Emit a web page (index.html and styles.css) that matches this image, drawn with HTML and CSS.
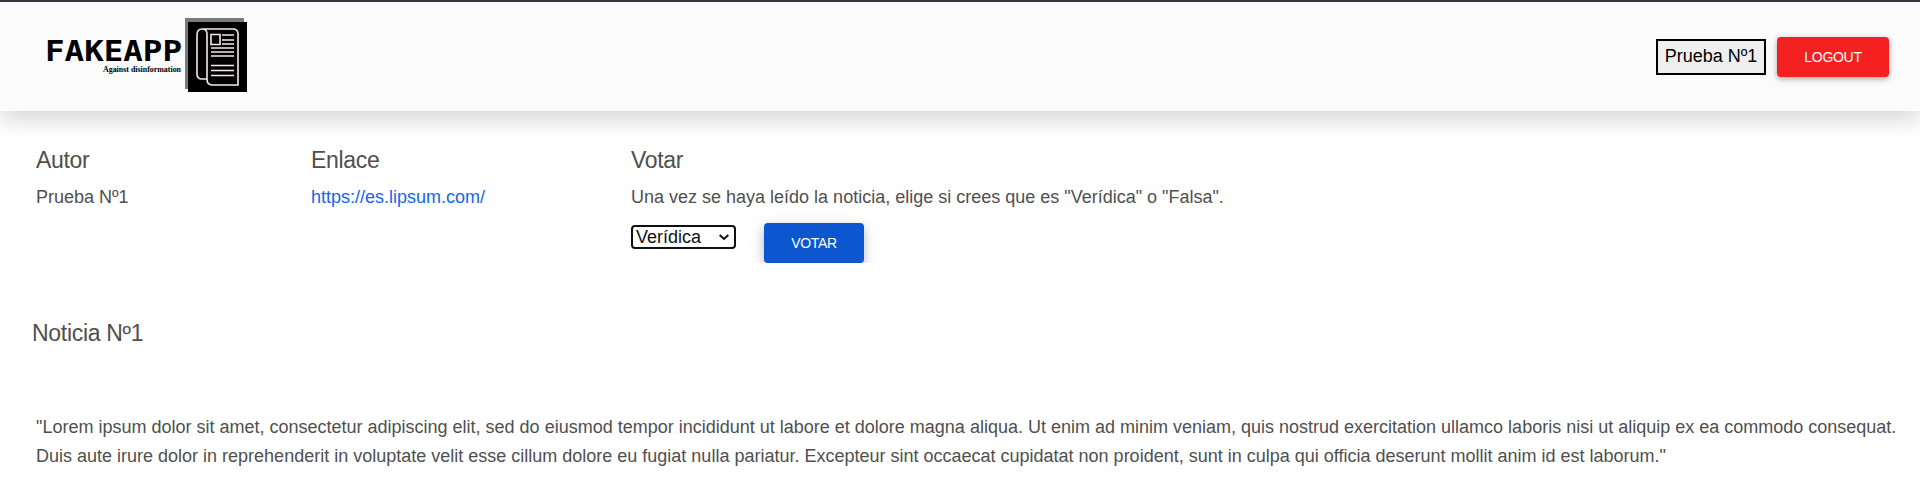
FILE: index.html
```html
<!DOCTYPE html>
<html lang="es">
<head>
<meta charset="utf-8">
<title>FakeApp</title>
<link rel="stylesheet" href="styles.css">
</head>
<body>
<header class="navbar">
  <div class="brand">
    <div class="brand-text">
      <svg class="wordmark" width="140" height="46" viewBox="0 0 140 46">
        <text class="brand-name" x="0" y="26.500" textLength="137" lengthAdjust="spacingAndGlyphs">FAKEAPP</text>
        <text class="brand-tagline" x="58" y="38" textLength="78" lengthAdjust="spacingAndGlyphs">Against disinformation</text>
      </svg>
    </div>
    <svg class="brand-icon" width="62" height="75" viewBox="0 0 62 75">
      <path fill="#7b7b7b" d="M0 0h59v71H0z"/>
      <path fill="#000" d="M3 4h59v70H3z"/>
      <g fill="none" stroke="#f5e8ea" stroke-width="1.6">
        <path d="M17 11h31q5 0 5 5v51H27q-5 0-5-6V16q0-5-5-5-5 0-5 6v39q0 5 5 5h5"/>
        <path d="M26 16.5h9v10h-9z"/>
        <path d="M37 17h12M37 22h12M37 26h12M26 30h23M26 34h23M26 38h23M26 47.500h23M26 52.500h23M26 57.500h23"/>
      </g>
    </svg>
  </div>
  <div class="session">
    <button class="user">Prueba Nº1</button>
    <button class="btn btn-logout">LOGOUT</button>
  </div>
</header>
<main class="content">
  <section class="details">
    <div class="column">
      <h2 class="heading">Autor</h2>
      <p class="text">Prueba Nº1</p>
    </div>
    <div class="column">
      <h2 class="heading">Enlace</h2>
      <p class="text"><a class="link" href="https://es.lipsum.com/">https://es.lipsum.com/</a></p>
    </div>
    <div class="column">
      <h2 class="heading">Votar</h2>
      <p class="text">Una vez se haya leído la noticia, elige si crees que es "Verídica" o "Falsa".</p>
      <form class="vote">
        <div class="select">
          <span>Verídica</span>
          <svg width="10" height="7" viewBox="0 0 10 7"><path d="M.7 1l4.300 4 4.300-4" fill="none" stroke="#101010" stroke-width="2"/></svg>
        </div>
        <button class="btn btn-vote" type="button">VOTAR</button>
      </form>
    </div>
  </section>
  <h2 class="heading news-title">Noticia Nº1</h2>
  <p class="text news-body">"Lorem ipsum dolor sit amet, consectetur adipiscing elit, sed do eiusmod tempor incididunt ut labore et dolore magna aliqua. Ut enim ad minim veniam, quis nostrud exercitation ullamco laboris nisi ut aliquip ex ea commodo consequat. Duis aute irure dolor in reprehenderit in voluptate velit esse cillum dolore eu fugiat nulla pariatur. Excepteur sint occaecat cupidatat non proident, sunt in culpa qui officia deserunt mollit anim id est laborum."</p>
</main>
</body>
</html>
```
FILE: styles.css
```css
* { box-sizing: border-box; }
body {
  margin: 0;
  background: #fff;
  color: #4f4f4f;
  font: 18px/29px "Liberation Sans", Arial, sans-serif;
  overflow: hidden;
}
svg { display: block; }
.navbar {
  display: flex;
  justify-content: space-between;
  align-items: flex-start;
  height: 111px;
  padding: 16px 31px 0 45px;
  border-top: 2px solid #3b3740;
  background: #fbfbfb;
  box-shadow: 0 10px 20px rgba(0, 0, 0, .15);
}
.brand { display: flex; }
.brand-text { padding-top: 16px; }
.wordmark { overflow: visible; }
.brand-name { font: bold 28.5px "DejaVu Sans Mono", monospace; }
.brand-tagline { font: bold 8.5px "Liberation Serif", serif; }
.session { display: flex; align-items: center; gap: 11px; padding-top: 19px; }
.user {
  width: 110px;
  height: 36px;
  padding: 0 0 2px;
  border: 2px solid #000;
  background: #efefef;
  color: #000;
  font: 18px/28px "Liberation Sans", Arial, sans-serif;
}
.btn {
  height: 40px;
  padding: 0;
  border: 0;
  border-radius: 4px;
  color: #fff;
  font: 14px/20px "Liberation Sans", Arial, sans-serif;
  letter-spacing: -.3px;
}
.btn-logout { width: 112px; background: #f52020; box-shadow: 0 2px 5px rgba(0, 0, 0, .25), 0 2px 10px rgba(0, 0, 0, .1); }
.content { padding: 34px 20px 0 32px; }
.details {
  display: grid;
  grid-template-columns: 275px 320px 1fr;
  height: 118px;
  padding-left: 4px;
  overflow: hidden;
}
.heading { margin: 0; font-size: 23px; line-height: 30px; font-weight: 400; letter-spacing: -.3px; }
.text { margin: 8px 0 0; }
.link { color: #1266f1; text-decoration: none; }
.vote { display: flex; align-items: flex-start; gap: 28px; margin-top: 11px; }
.select {
  display: flex;
  justify-content: space-between;
  align-items: center;
  width: 105px;
  height: 24px;
  margin-top: 2px;
  padding: 0 5px 0 3px;
  border: 2px solid #101010;
  border-radius: 4px;
  color: #101010;
  line-height: 20px;
}
.btn-vote { width: 100px; background: #0c56d0; box-shadow: 0 4px 10px rgba(0, 0, 0, .2), 0 4px 20px rgba(0, 0, 0, .1); }
.news-title { margin-top: 55px; }
.news-body { margin: 65px 0 0 4px; }
```
